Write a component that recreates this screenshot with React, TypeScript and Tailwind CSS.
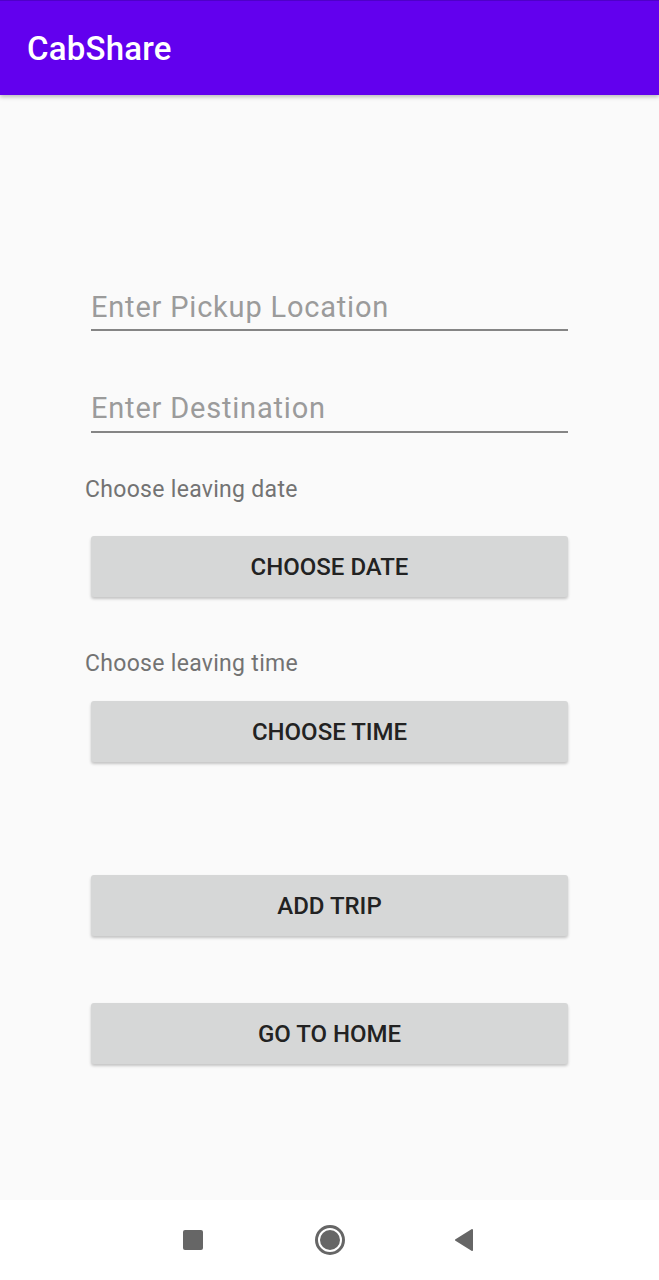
import React from "react";

const font = { fontFamily: "Roboto, 'Liberation Sans', sans-serif" };

function Btn({ label, className = "" }: { label: string; className?: string }) {
  return (
    <div
      className={`mx-[91px] h-[61px] rounded-[3px] bg-[#d6d7d7] flex items-center justify-center shadow-[0_2px_3px_rgba(0,0,0,0.22)] ${className}`}
    >
      <span className="text-[24px] leading-[28px] font-medium text-[#222222]">{label}</span>
    </div>
  );
}

export default function App() {
  return (
    <div className="w-[659px] h-[1280px] bg-[#fafafa] flex flex-col overflow-hidden" style={font}>
      <div className="h-[95px] bg-[#6200ee] border-t border-[#4f00c8] flex items-center px-[27px] shadow-[0_2px_4px_rgba(0,0,0,0.25)] relative z-10">
        <span className="text-[33px] leading-[38px] font-medium text-white tracking-[0.2px] mt-[1px]">CabShare</span>
      </div>

      <div className="flex-1 flex flex-col">
        {/* Pickup */}
        <div className="mx-[91px] mt-[195px]">
          <div className="text-[29px] leading-[34px] text-[#9b9b9b] tracking-[0.8px]">Enter Pickup Location</div>
          <div className="mt-[5px] h-[2px] bg-[#858585]" />
        </div>
        {/* Destination */}
        <div className="mx-[91px] mt-[60px]">
          <div className="text-[29px] leading-[34px] text-[#9b9b9b] tracking-[0.8px]">Enter Destination</div>
          <div className="mt-[6px] h-[2px] bg-[#858585]" />
        </div>

        <div className="ml-[85px] mt-[43px] text-[23px] leading-[28px] text-[#737373] tracking-[0.3px]">Choose leaving date</div>
        <Btn label="CHOOSE DATE" className="mt-[32px]" />

        <div className="ml-[85px] mt-[53px] text-[23px] leading-[28px] text-[#737373] tracking-[0.3px]">Choose leaving time</div>
        <Btn label="CHOOSE TIME" className="mt-[23px]" />

        <Btn label="ADD TRIP" className="mt-[113px]" />
        <Btn label="GO TO HOME" className="mt-[67px]" />
      </div>

      <div className="h-[80px] bg-white flex items-center">
        <div className="ml-[183px] w-[20px] h-[20px] rounded-[2px] bg-[#666666]" />
        <div className="ml-[112px] w-[30px] h-[30px] rounded-full border-[3px] border-[#666666] flex items-center justify-center">
          <div className="w-[20px] h-[20px] rounded-full bg-[#666666]" />
        </div>
        <svg className="ml-[109px]" width="20" height="24" viewBox="0 0 20 24">
          <path d="M18 2 L2 12 L18 22 Z" fill="#666666" stroke="#666666" strokeWidth="2" strokeLinejoin="round" />
        </svg>
      </div>
    </div>
  );
}
